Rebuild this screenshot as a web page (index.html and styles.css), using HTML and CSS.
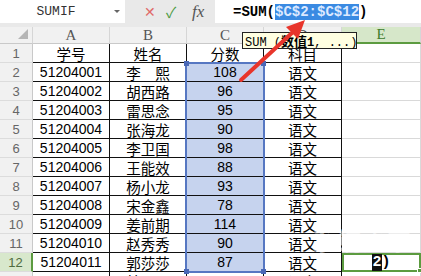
FILE: index.html
```html
<!DOCTYPE html>
<html lang="zh">
<head>
<meta charset="utf-8">
<title>SUM</title>
<link rel="stylesheet" href="styles.css">
</head>
<body>
<div class="fbar">
  <div class="namebox"><span class="nm">SUMIF</span><i class="dd"></i></div>
  <div class="fbtns"><span class="bx">✕</span><span class="bok">✓</span><span class="bfx">fx</span></div>
  <div class="finput"><span>=SUM(</span><span class="hl">$C$2:$C$12</span><span>)</span></div>
</div>
<div class="sheet">
  <div class="ch corner"><svg width="12" height="12" viewBox="0 0 12 12"><polygon points="11,1 11,11 1,11" fill="#b5b5b5"/></svg></div>
  <div class="ch">A</div><div class="ch">B</div><div class="ch">C</div><div class="ch">D</div><div class="ch act">E</div>

  <div class="rh">1</div><div class="c">学号</div><div class="c">姓名</div><div class="c">分数</div><div class="c">科目</div><div class="e"></div>
  <div class="rh">2</div><div class="c n">51204001</div><div class="c">李　熙</div><div class="c n sel">108</div><div class="c">语文</div><div class="e"></div>
  <div class="rh">3</div><div class="c n">51204002</div><div class="c">胡西路</div><div class="c n sel">96</div><div class="c">语文</div><div class="e"></div>
  <div class="rh">4</div><div class="c n">51204003</div><div class="c">雷思念</div><div class="c n sel">95</div><div class="c">语文</div><div class="e"></div>
  <div class="rh">5</div><div class="c n">51204004</div><div class="c">张海龙</div><div class="c n sel">90</div><div class="c">语文</div><div class="e"></div>
  <div class="rh">6</div><div class="c n">51204005</div><div class="c">李卫国</div><div class="c n sel">98</div><div class="c">语文</div><div class="e"></div>
  <div class="rh">7</div><div class="c n">51204006</div><div class="c">王能效</div><div class="c n sel">88</div><div class="c">语文</div><div class="e"></div>
  <div class="rh">8</div><div class="c n">51204007</div><div class="c">杨小龙</div><div class="c n sel">93</div><div class="c">语文</div><div class="e"></div>
  <div class="rh">9</div><div class="c n">51204008</div><div class="c">宋金鑫</div><div class="c n sel">78</div><div class="c">语文</div><div class="e"></div>
  <div class="rh">10</div><div class="c n">51204009</div><div class="c">姜前期</div><div class="c n sel">114</div><div class="c">语文</div><div class="e"></div>
  <div class="rh">11</div><div class="c n">51204010</div><div class="c">赵秀秀</div><div class="c n sel">90</div><div class="c">语文</div><div class="e"></div>
  <div class="rh act">12</div><div class="c n">51204011</div><div class="c">郭莎莎</div><div class="c n sel">87</div><div class="c">语文</div><div class="e active"><span class="edit"><span class="caret">2</span>)</span><i class="fill"></i></div>
  <div class="rh">13</div><div class="c n"></div><div class="c">韩思思</div><div class="c n"></div><div class="c">语文</div><div class="e"></div>

  <div class="selbox"><i class="hd tl"></i><i class="hd tr"></i><i class="hd bl"></i><i class="hd br"></i></div>
</div>

<div class="tip">SUM (<b><span class="cjk">数值</span>1</b>, ...)</div>
<div class="mark">系统之家</div>
<svg class="arrow" width="421" height="276" viewBox="0 0 421 276">
  <line x1="241" y1="80" x2="293" y2="32" stroke="#e8352b" stroke-width="4" stroke-linecap="round"/>
  <polygon points="305,20 298,39 286,27" fill="#e8352b"/>
</svg>
</body>
</html>
```
FILE: styles.css
```css
* { box-sizing: border-box; margin: 0; padding: 0; }
body {
  margin: 0;
  width: 421px;
  height: 276px;
  overflow: hidden;
  position: relative;
  background: #fff;
  font-family: "Liberation Sans", "Noto Sans CJK SC", sans-serif;
}
.fbar {
  display: flex;
  height: 27px;
  padding-bottom: 4px;
  background: #e9e9e9;
}
.namebox {
  width: 125px;
  background: #fff;
  display: flex;
  align-items: center;
}
.nm {
  width: 112px;
  text-align: center;
  font: 13px "Liberation Mono", monospace;
  color: #333;
}
.dd {
  width: 0;
  height: 0;
  border-left: 3px solid transparent;
  border-right: 3px solid transparent;
  border-top: 3px solid #666;
  margin-left: 2px;
}
.fbtns {
  width: 90px;
  display: flex;
  align-items: center;
  padding-left: 19px;
  gap: 9px;
}
.bx { color: #e06a6a; font-size: 14px; width: 13px; }
.bok { color: #4d9b45; font-size: 15px; width: 14px; }
.bfx { font: italic 17px "Liberation Serif", serif; color: #555; margin-left: 3px; }
.finput {
  flex: 1;
  background: #fff;
  display: flex;
  align-items: center;
  padding-left: 18px;
  font: bold 14px "Liberation Mono", monospace;
  color: #000;
}
.hl { background: #3a8ae2; color: #dce9ff; line-height: 16px; }

.sheet {
  position: relative;
  display: grid;
  grid-template-columns: 33px 77px 77px 77px 78px 79px;
  grid-template-rows: 17px repeat(13, 19px);
}
.ch {
  background: #f1f1f1;
  border-right: 1px solid #d6d6d6;
  border-bottom: 1px solid #c9c9c9;
  display: flex;
  align-items: center;
  justify-content: center;
  font: 15px "Liberation Serif", serif;
  color: #555;
}
.corner { justify-content: flex-end; align-items: flex-end; padding: 0 3px 3px 0; }
.ch.act {
  background: #d6e7c9;
  color: #3e7d2c;
  border-bottom: 2px solid #5c9b40;
}
.rh {
  background: #f1f1f1;
  border-right: 1px solid #c9c9c9;
  border-bottom: 1px solid #dcdcdc;
  display: flex;
  align-items: center;
  justify-content: center;
  font-size: 13px;
  color: #666;
}
.rh.act {
  background: #d8e8cc;
  color: #4e6b3f;
  border-right: 2px solid #5c9b40;
}
.c {
  border-right: 1px solid #111;
  border-bottom: 1px solid #111;
  display: flex;
  align-items: center;
  justify-content: center;
  font-size: 14.5px;
  color: #000;
  white-space: nowrap;
}
.c.n { font-size: 14px; }
.sel { background: #c6d3ee; }
.e {
  border-right: 1px solid #d9d9d9;
  border-bottom: 1px solid #d9d9d9;
}
.e.active {
  border: 2px solid #5c9b40;
  position: relative;
  display: flex;
  align-items: center;
  justify-content: center;
  font: bold 15px "Liberation Mono", monospace;
}
.caret { background: #111; color: #fff; }
.fill {
  position: absolute;
  right: -3px;
  bottom: -3px;
  width: 5px;
  height: 5px;
  background: #5c9b40;
  border: 1px solid #fff;
}
.selbox {
  position: absolute;
  grid-column: 4 / 5;
  grid-row: 3 / 14;
  top: -1px;
  bottom: -1px;
  left: -2px;
  right: -1px;
  border: 2px solid #5677c2;
  z-index: 2;
}
.hd {
  position: absolute;
  width: 5px;
  height: 5px;
  background: #4a68b6;
}
.tl { left: -3px; top: -3px; }
.tr { right: -3px; top: -3px; }
.bl { left: -3px; bottom: -3px; }
.br { right: -3px; bottom: -3px; }

.tip {
  position: absolute;
  left: 242px;
  top: 32px;
  width: 115px;
  height: 17px;
  background: #ffffe1;
  border: 1px solid #222;
  font: 12px "Liberation Mono", monospace;
  line-height: 15px;
  padding-left: 2px;
  white-space: nowrap;
  color: #000;
  z-index: 3;
}
.tip .cjk { font-family: "Noto Sans CJK SC", sans-serif; font-size: 13px; }
.mark {
  position: absolute;
  left: 312px;
  top: 222px;
  font: bold 24px "Noto Sans CJK SC", sans-serif;
  color: rgba(255, 255, 255, 0.55);
  letter-spacing: 1px;
  z-index: 4;
}
.arrow {
  position: absolute;
  left: 0;
  top: 0;
  z-index: 5;
}
```
